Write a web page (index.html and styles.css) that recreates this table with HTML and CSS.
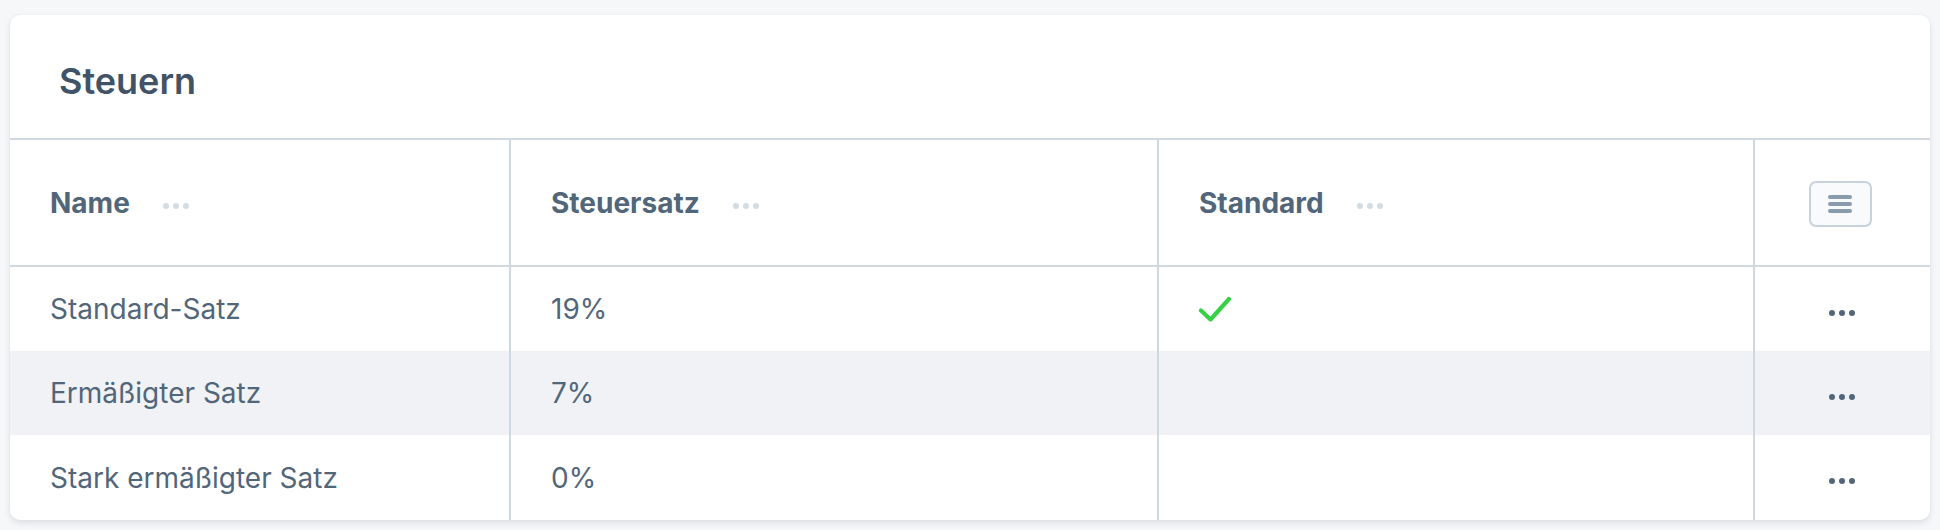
FILE: index.html
```html
<!DOCTYPE html>
<html lang="de">
<head>
<meta charset="utf-8">
<title>Steuern</title>
<link rel="stylesheet" href="styles.css">
</head>
<body>
<div class="card">
  <div class="card-header">
    <h2 class="card-title">Steuern</h2>
  </div>
  <div class="grid">
    <div class="cell head">
      <span class="head-label">Name</span>
      <span class="head-dots"><i></i><i></i><i></i></span>
    </div>
    <div class="cell head">
      <span class="head-label">Steuersatz</span>
      <span class="head-dots"><i></i><i></i><i></i></span>
    </div>
    <div class="cell head">
      <span class="head-label">Standard</span>
      <span class="head-dots"><i></i><i></i><i></i></span>
    </div>
    <div class="cell head actions last">
      <button class="menu-btn" type="button" aria-label="Spalten">
        <svg width="24" height="20" viewBox="0 0 24 20"><path d="M2 3h20M2 10h20M2 17h20" stroke="#8a9bab" stroke-width="4" stroke-linecap="round" fill="none"/></svg>
      </button>
    </div>

    <div class="cell">Standard-Satz</div>
    <div class="cell">19%</div>
    <div class="cell">
      <svg class="check" width="34" height="26" viewBox="0 0 34 26"><path d="M3 14.5l9.5 9L31 3" stroke="#37d046" stroke-width="4.2" stroke-linecap="round" stroke-linejoin="round" fill="none"/></svg>
    </div>
    <div class="cell actions last"><span class="row-dots"><i></i><i></i><i></i></span></div>

    <div class="cell alt">Ermäßigter Satz</div>
    <div class="cell alt">7%</div>
    <div class="cell alt"></div>
    <div class="cell alt actions last"><span class="row-dots"><i></i><i></i><i></i></span></div>

    <div class="cell">Stark ermäßigter Satz</div>
    <div class="cell">0%</div>
    <div class="cell"></div>
    <div class="cell actions last"><span class="row-dots"><i></i><i></i><i></i></span></div>
  </div>
</div>
</body>
</html>
```

FILE: styles.css
```css
* { box-sizing: border-box; }

html, body {
  margin: 0;
  padding: 0;
}

body {
  background: #f6f7f9;
  font-family: Inter, "Noto Sans", sans-serif;
  color: #52667a;
  padding: 15px 10px 10px 10px;
}

.card {
  width: 1920px;
  background: #ffffff;
  border-radius: 10px;
  box-shadow: 0 3px 6px rgba(40, 60, 80, 0.12), 0 0 2px rgba(40, 60, 80, 0.06);
  overflow: hidden;
}

.card-header {
  height: 125px;
  display: flex;
  align-items: center;
  padding-left: 49px;
  padding-top: 8px;
  border-bottom: 2px solid #d1d9e0;
}

.card-title {
  margin: 0;
  font-size: 36px;
  font-weight: 600;
  color: #415367;
  letter-spacing: 0;
}

.grid {
  display: grid;
  grid-template-columns: 501px 648px 596px 175px;
  grid-template-rows: 127px 84px 84px 85px;
}

.cell {
  display: flex;
  align-items: center;
  padding-left: 40px;
  border-right: 2px solid #d1d9e0;
  font-size: 28px;
  font-weight: 400;
  color: #52667a;
}

.cell.last {
  border-right: 0;
}

.cell.head {
  border-bottom: 2px solid #d1d9e0;
}

.cell.alt {
  background: #f0f2f5;
}

.head-label {
  font-size: 28px;
  font-weight: 700;
  color: #52667a;
}

.head-dots,
.row-dots {
  display: inline-flex;
  gap: 4px;
}

.head-dots {
  margin-left: 33px;
  margin-top: 6px;
}

.head-dots i,
.row-dots i {
  display: block;
  width: 6px;
  height: 6px;
  border-radius: 50%;
}

.head-dots i { background: #d3dbe3; }
.row-dots i { background: #52667a; }

.row-dots {
  margin-top: 7px;
}

.cell.actions {
  justify-content: center;
  padding-left: 0;
  padding-right: 2px;
}

.menu-btn {
  width: 63px;
  height: 46px;
  border: 2px solid #c8d2dc;
  border-radius: 7px;
  background: #f9fafb;
  display: flex;
  align-items: center;
  justify-content: center;
  padding: 0;
  margin-left: -3px;
  margin-top: 2px;
}

.check {
  display: block;
  margin-left: -1px;
  margin-top: 0;
}
```
